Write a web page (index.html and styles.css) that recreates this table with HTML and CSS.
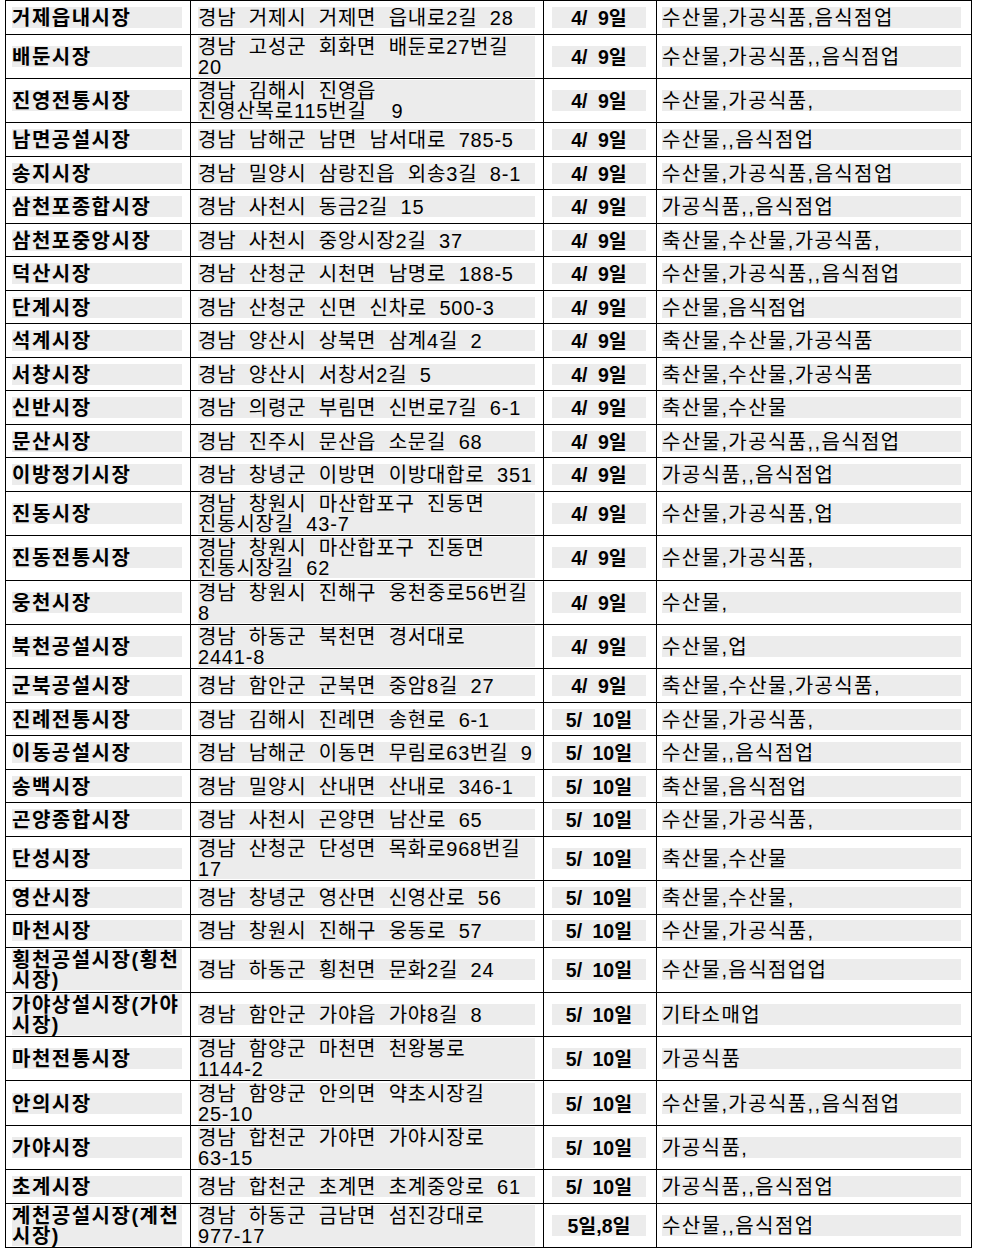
FILE: index.html
```html
<!DOCTYPE html>
<html lang="ko">
<head>
<meta charset="utf-8">
<link rel="stylesheet" href="styles.css">
</head>
<body>
<table class="tbl">
<colgroup><col class="w1"><col class="w2"><col class="w3"><col class="w4"></colgroup>
<tbody>
<tr class="s"><td class="c1"><div class="p">거제읍내시장</div></td><td class="c2"><div class="p">경남 거제시 거제면 읍내로2길 28</div></td><td class="c3"><div class="p">4/ 9일</div></td><td class="c4"><div class="p">수산물,가공식품,음식점업</div></td></tr>
<tr class="d"><td class="c1"><div class="p">배둔시장</div></td><td class="c2"><div class="p">경남 고성군 회화면 배둔로27번길<br>20</div></td><td class="c3"><div class="p">4/ 9일</div></td><td class="c4"><div class="p">수산물,가공식품,,음식점업</div></td></tr>
<tr class="d"><td class="c1"><div class="p">진영전통시장</div></td><td class="c2"><div class="p">경남 김해시 진영읍<br>진영산복로115번길 &nbsp;9</div></td><td class="c3"><div class="p">4/ 9일</div></td><td class="c4"><div class="p">수산물,가공식품,</div></td></tr>
<tr class="s"><td class="c1"><div class="p">남면공설시장</div></td><td class="c2"><div class="p">경남 남해군 남면 남서대로 785-5</div></td><td class="c3"><div class="p">4/ 9일</div></td><td class="c4"><div class="p">수산물,,음식점업</div></td></tr>
<tr class="s"><td class="c1"><div class="p">송지시장</div></td><td class="c2"><div class="p">경남 밀양시 삼랑진읍 외송3길 8-1</div></td><td class="c3"><div class="p">4/ 9일</div></td><td class="c4"><div class="p">수산물,가공식품,음식점업</div></td></tr>
<tr class="s"><td class="c1"><div class="p">삼천포종합시장</div></td><td class="c2"><div class="p">경남 사천시 동금2길 15</div></td><td class="c3"><div class="p">4/ 9일</div></td><td class="c4"><div class="p">가공식품,,음식점업</div></td></tr>
<tr class="s"><td class="c1"><div class="p">삼천포중앙시장</div></td><td class="c2"><div class="p">경남 사천시 중앙시장2길 37</div></td><td class="c3"><div class="p">4/ 9일</div></td><td class="c4"><div class="p">축산물,수산물,가공식품,</div></td></tr>
<tr class="s"><td class="c1"><div class="p">덕산시장</div></td><td class="c2"><div class="p">경남 산청군 시천면 남명로 188-5</div></td><td class="c3"><div class="p">4/ 9일</div></td><td class="c4"><div class="p">수산물,가공식품,,음식점업</div></td></tr>
<tr class="s"><td class="c1"><div class="p">단계시장</div></td><td class="c2"><div class="p">경남 산청군 신면 신차로 500-3</div></td><td class="c3"><div class="p">4/ 9일</div></td><td class="c4"><div class="p">수산물,음식점업</div></td></tr>
<tr class="s"><td class="c1"><div class="p">석계시장</div></td><td class="c2"><div class="p">경남 양산시 상북면 삼계4길 2</div></td><td class="c3"><div class="p">4/ 9일</div></td><td class="c4"><div class="p">축산물,수산물,가공식품</div></td></tr>
<tr class="s"><td class="c1"><div class="p">서창시장</div></td><td class="c2"><div class="p">경남 양산시 서창서2길 5</div></td><td class="c3"><div class="p">4/ 9일</div></td><td class="c4"><div class="p">축산물,수산물,가공식품</div></td></tr>
<tr class="s"><td class="c1"><div class="p">신반시장</div></td><td class="c2"><div class="p">경남 의령군 부림면 신번로7길 6-1</div></td><td class="c3"><div class="p">4/ 9일</div></td><td class="c4"><div class="p">축산물,수산물</div></td></tr>
<tr class="s"><td class="c1"><div class="p">문산시장</div></td><td class="c2"><div class="p">경남 진주시 문산읍 소문길 68</div></td><td class="c3"><div class="p">4/ 9일</div></td><td class="c4"><div class="p">수산물,가공식품,,음식점업</div></td></tr>
<tr class="s"><td class="c1"><div class="p">이방정기시장</div></td><td class="c2"><div class="p">경남 창녕군 이방면 이방대합로 351</div></td><td class="c3"><div class="p">4/ 9일</div></td><td class="c4"><div class="p">가공식품,,음식점업</div></td></tr>
<tr class="d"><td class="c1"><div class="p">진동시장</div></td><td class="c2"><div class="p">경남 창원시 마산합포구 진동면<br>진동시장길 43-7</div></td><td class="c3"><div class="p">4/ 9일</div></td><td class="c4"><div class="p">수산물,가공식품,업</div></td></tr>
<tr class="d"><td class="c1"><div class="p">진동전통시장</div></td><td class="c2"><div class="p">경남 창원시 마산합포구 진동면<br>진동시장길 62</div></td><td class="c3"><div class="p">4/ 9일</div></td><td class="c4"><div class="p">수산물,가공식품,</div></td></tr>
<tr class="d"><td class="c1"><div class="p">웅천시장</div></td><td class="c2"><div class="p">경남 창원시 진해구 웅천중로56번길<br>8</div></td><td class="c3"><div class="p">4/ 9일</div></td><td class="c4"><div class="p">수산물,</div></td></tr>
<tr class="d"><td class="c1"><div class="p">북천공설시장</div></td><td class="c2"><div class="p">경남 하동군 북천면 경서대로<br>2441-8</div></td><td class="c3"><div class="p">4/ 9일</div></td><td class="c4"><div class="p">수산물,업</div></td></tr>
<tr class="s"><td class="c1"><div class="p">군북공설시장</div></td><td class="c2"><div class="p">경남 함안군 군북면 중암8길 27</div></td><td class="c3"><div class="p">4/ 9일</div></td><td class="c4"><div class="p">축산물,수산물,가공식품,</div></td></tr>
<tr class="s"><td class="c1"><div class="p">진례전통시장</div></td><td class="c2"><div class="p">경남 김해시 진례면 송현로 6-1</div></td><td class="c3"><div class="p">5/ 10일</div></td><td class="c4"><div class="p">수산물,가공식품,</div></td></tr>
<tr class="s"><td class="c1"><div class="p">이동공설시장</div></td><td class="c2"><div class="p">경남 남해군 이동면 무림로63번길 9</div></td><td class="c3"><div class="p">5/ 10일</div></td><td class="c4"><div class="p">수산물,,음식점업</div></td></tr>
<tr class="s"><td class="c1"><div class="p">송백시장</div></td><td class="c2"><div class="p">경남 밀양시 산내면 산내로 346-1</div></td><td class="c3"><div class="p">5/ 10일</div></td><td class="c4"><div class="p">축산물,음식점업</div></td></tr>
<tr class="s"><td class="c1"><div class="p">곤양종합시장</div></td><td class="c2"><div class="p">경남 사천시 곤양면 남산로 65</div></td><td class="c3"><div class="p">5/ 10일</div></td><td class="c4"><div class="p">수산물,가공식품,</div></td></tr>
<tr class="d"><td class="c1"><div class="p">단성시장</div></td><td class="c2"><div class="p">경남 산청군 단성면 목화로968번길<br>17</div></td><td class="c3"><div class="p">5/ 10일</div></td><td class="c4"><div class="p">축산물,수산물</div></td></tr>
<tr class="s"><td class="c1"><div class="p">영산시장</div></td><td class="c2"><div class="p">경남 창녕군 영산면 신영산로 56</div></td><td class="c3"><div class="p">5/ 10일</div></td><td class="c4"><div class="p">축산물,수산물,</div></td></tr>
<tr class="s"><td class="c1"><div class="p">마천시장</div></td><td class="c2"><div class="p">경남 창원시 진해구 웅동로 57</div></td><td class="c3"><div class="p">5/ 10일</div></td><td class="c4"><div class="p">수산물,가공식품,</div></td></tr>
<tr class="d"><td class="c1"><div class="p">횡천공설시장(횡천<br>시장)</div></td><td class="c2"><div class="p">경남 하동군 횡천면 문화2길 24</div></td><td class="c3"><div class="p">5/ 10일</div></td><td class="c4"><div class="p">수산물,음식점업업</div></td></tr>
<tr class="d"><td class="c1"><div class="p">가야상설시장(가야<br>시장)</div></td><td class="c2"><div class="p">경남 함안군 가야읍 가야8길 8</div></td><td class="c3"><div class="p">5/ 10일</div></td><td class="c4"><div class="p">기타소매업</div></td></tr>
<tr class="d"><td class="c1"><div class="p">마천전통시장</div></td><td class="c2"><div class="p">경남 함양군 마천면 천왕봉로<br>1144-2</div></td><td class="c3"><div class="p">5/ 10일</div></td><td class="c4"><div class="p">가공식품</div></td></tr>
<tr class="d"><td class="c1"><div class="p">안의시장</div></td><td class="c2"><div class="p">경남 함양군 안의면 약초시장길<br>25-10</div></td><td class="c3"><div class="p">5/ 10일</div></td><td class="c4"><div class="p">수산물,가공식품,,음식점업</div></td></tr>
<tr class="d"><td class="c1"><div class="p">가야시장</div></td><td class="c2"><div class="p">경남 합천군 가야면 가야시장로<br>63-15</div></td><td class="c3"><div class="p">5/ 10일</div></td><td class="c4"><div class="p">가공식품,</div></td></tr>
<tr class="s"><td class="c1"><div class="p">초계시장</div></td><td class="c2"><div class="p">경남 합천군 초계면 초계중앙로 61</div></td><td class="c3"><div class="p">5/ 10일</div></td><td class="c4"><div class="p">가공식품,,음식점업</div></td></tr>
<tr class="d"><td class="c1"><div class="p">계천공설시장(계천<br>시장)</div></td><td class="c2"><div class="p">경남 하동군 금남면 섬진강대로<br>977-17</div></td><td class="c3"><div class="p">5일,8일</div></td><td class="c4"><div class="p">수산물,,음식점업</div></td></tr>
</tbody>
</table>
</body>
</html>
```
FILE: styles.css
```css
html, body {
  margin: 0;
  padding: 0;
  background: #ffffff;
}
body {
  font-family: "Liberation Sans", "Noto Sans CJK KR", sans-serif;
  color: #000000;
}
.tbl {
  border-collapse: collapse;
  table-layout: fixed;
  width: 966px;
  margin-left: 5px;
}
.w1 { width: 185px; }
.w2 { width: 353px; }
.w3 { width: 113px; }
.w4 { width: 315px; }
.tbl td {
  border: 1px solid #000000;
  padding: 0;
  vertical-align: middle;
}
tr.s { height: 33.5px; }
tr.d { height: 44.4px; }
td.c1 { padding: 0 8px 0 6px; }
td.c2 { padding: 0 8px 0 7px; }
td.c3 { padding: 0 10px 0 8px; }
td.c4 { padding: 0 10px 0 5px; }
.p {
  background: #ececec;
  padding-top: 1px;
  line-height: 20px;
  white-space: nowrap;
}
.c1 .p {
  font-weight: bold;
  font-size: 20px;
  letter-spacing: 1.5px;
}
.c2 .p {
  font-size: 20px;
  letter-spacing: 0.8px;
  word-spacing: 6px;
}
.c3 .p {
  font-weight: bold;
  font-size: 19.5px;
  text-align: center;
  word-spacing: 5px;
}
.c4 .p {
  font-size: 20px;
  letter-spacing: 1.4px;
}
```
